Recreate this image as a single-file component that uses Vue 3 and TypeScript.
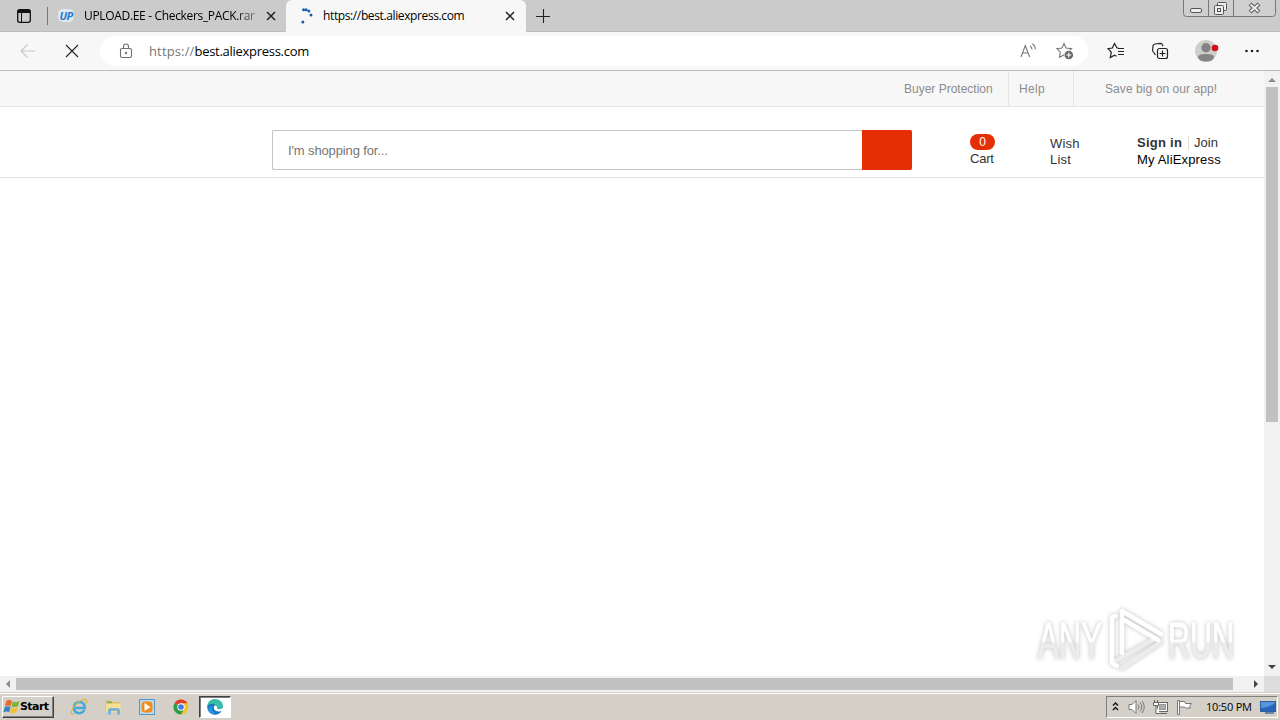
<script setup lang="ts">
interface Launcher { id: string; active: boolean }

const tabs = [
  { title: 'UPLOAD.EE - Checkers_PACK.rar', active: false },
  { title: 'https://best.aliexpress.com', active: true },
]
const launchers: Launcher[] = [
  { id: 'ie', active: false },
  { id: 'explorer', active: false },
  { id: 'player', active: false },
  { id: 'chrome', active: false },
  { id: 'edge', active: true },
]
</script>

<template>
  <div class="screen">
    <header class="tabstrip">
      <svg class="tab-menu" width="16" height="16" viewBox="0 0 16 16">
        <rect x="1.700" y="1.700" width="12.600" height="12.600" rx="2" fill="none" stroke="#111" stroke-width="1.300" />
        <path d="M1.500 5V3.500Q1.500 1.500 3.500 1.500h9q2 0 2 2V5z" fill="#111" />
        <path d="M5.500 5v9" stroke="#111" />
      </svg>
      <i class="sep"></i>
      <div v-for="tab in tabs" :key="tab.title" class="tab" :class="{ active: tab.active }">
        <svg v-if="tab.active" class="fav" width="16" height="16" viewBox="0 0 16 16">
          <g fill="#0f5fa8">
            <circle cx="5.500" cy="1.800" r="1.500" /><circle cx="8" cy="1.700" r="1.500" /><circle cx="10.800" cy="3" r="1.500" />
            <circle cx="13" cy="7" r="1.500" /><circle cx="4.800" cy="14" r="1.500" />
          </g>
        </svg>
        <span v-else class="fav up">UP</span>
        <span class="title">{{ tab.title }}</span>
        <svg class="close" width="10" height="10" viewBox="0 0 10 10"><path d="M1 1l8 8M9 1l-8 8" stroke="#222" stroke-width="1.500" /></svg>
      </div>
      <svg class="plus" width="14" height="14" viewBox="0 0 14 14"><path d="M7.500 0v14M0 7.500h14" stroke="#222" stroke-width="1.100" /></svg>
      <svg class="winctl" width="94" height="18" viewBox="0 0 94 18">
        <path d="M.5 0v13.500q0 3 3 3h86q3 0 3-3V0M25.500 0v16.500M50.500 0v16.500" fill="#cfcfcf" stroke="#777" />
        <rect x="7.500" y="8.500" width="11" height="4" rx="1.500" fill="#eee" stroke="#555" />
        <g fill="#eee" stroke="#555"><rect x="34.500" y="2.500" width="9" height="8" rx="1" /><rect x="31.500" y="5.500" width="9" height="9" rx="1" /><rect x="34.500" y="8.500" width="3" height="3" /></g>
        <path d="M67 4l9 8M76 4l-9 8" stroke="#555" stroke-width="4" /><path d="M67.500 4.500l8 7M75.500 4.500l-8 7" stroke="#eee" stroke-width="2" />
      </svg>
    </header>

    <div class="toolbar">
      <svg class="back" width="18" height="16" viewBox="0 0 18 16"><path d="M16 8H2M8.500 1.500L2 8l6.500 6.500" fill="none" stroke="#c8c8c8" stroke-width="1.200" /></svg>
      <svg class="stop" width="14" height="14" viewBox="0 0 14 14"><path d="M1 1l12 12M13 1L1 13" stroke="#222" stroke-width="1.100" /></svg>
      <div class="omnibox">
        <svg width="14" height="16" viewBox="0 0 14 16" fill="none" stroke="#707070" stroke-width="1.100"><rect x="1.500" y="5.500" width="11" height="9" rx="1.500" /><path d="M4.500 5.500V3.500a2.500 2.500 0 0 1 5 0v2" /><circle cx="7" cy="10" r=".6" fill="#707070" /></svg>
        <span class="url"><em>https://</em>best.aliexpress.com</span>
        <svg class="read" width="17" height="16" viewBox="0 0 17 16" fill="none" stroke="#777" stroke-width="1.100"><path d="M1 14L5.300 2.500 9.600 14M2.500 10h5.600M10 3q2 1.200 2 3.500M12.300.8q3.200 2 2.900 5.700" /></svg>
        <svg class="favadd" width="18" height="18" viewBox="0 0 18 18"><path d="M8 1.500l2 4.500 5.500.7-3.800 3.600.8 4.900-4.500-2.300-4.500 2.300.8-5.100L.8 6.600 6 6z" fill="none" stroke="#777" stroke-width="1.100" /><circle cx="12.800" cy="13" r="5" fill="#fff" /><circle cx="12.800" cy="13" r="4.300" fill="#666" /><path d="M12.800 10.500v5M10.300 13h5" stroke="#fff" stroke-width="1.100" /></svg>
      </div>
      <svg class="favs" width="18" height="18" viewBox="0 0 18 18" fill="none" stroke="#222" stroke-width="1.200"><path d="M11.500 6H10L7.500 1.500 5.300 6 1 6.700l3.300 3.500-1 5.300 4.200-2.300 2 1M11 6.500h6M11 9.500h6M11 12.500h6" /></svg>
      <svg class="collect" width="18" height="18" viewBox="0 0 18 18" fill="none" stroke="#222" stroke-width="1.200"><rect x="6.500" y="6.500" width="10" height="10" rx="2" /><path d="M4.500 13L2 9.500Q1 8 1.800 6.500L2 3.800Q2.200 2.200 4 2l5.500-.6q1.500 0 2 1.500l.5 1.300M11.500 8.500v6M8.500 11.500h6" /></svg>
      <svg class="avatar" width="25" height="24" viewBox="0 0 25 24"><circle cx="12" cy="12" r="11" fill="#d0cecd" /><circle cx="12" cy="8.800" r="4.700" fill="#858381" /><path d="M4 18q0-3 8-3t8 3q-1 4.500-8 4.500T4 18" fill="#858381" /><circle cx="21" cy="9" r="3.300" fill="#d50f1b" /></svg>
      <svg class="dots" width="16" height="4" viewBox="0 0 16 4" fill="#222"><circle cx="2.500" cy="2" r="1.300" /><circle cx="8" cy="2" r="1.300" /><circle cx="13.500" cy="2" r="1.300" /></svg>
    </div>

    <div class="viewport">
      <main class="page">
        <nav class="topbar">
          <span class="protect">Buyer Protection</span>
          <span class="help">Help</span>
          <span class="app">Save big on our app!</span>
        </nav>
        <section class="head">
          <div class="search"><span>I'm shopping for...</span><b></b></div>
          <div class="cart"><b>0</b><span>Cart</span></div>
          <div class="wish">Wish<br />List</div>
          <div class="user">
            <div class="sign"><strong>Sign in</strong><i></i><span>Join</span></div>
            <span class="my">My AliExpress</span>
          </div>
        </section>
        <svg class="mark" width="230" height="80" viewBox="0 0 230 80">
          <defs>
            <linearGradient id="fade" gradientUnits="userSpaceOnUse" x1="0" y1="22" x2="0" y2="62">
              <stop offset=".5" stop-color="#fff" /><stop offset=".56" stop-color="#ececec" />
            </linearGradient>
          </defs>
          <g class="word">
            <text x="18" y="59" textLength="64" lengthAdjust="spacingAndGlyphs">ANY</text>
            <text x="148" y="59" textLength="66" lengthAdjust="spacingAndGlyphs">RUN</text>
          </g>
          <g class="play">
            <path class="dim" d="M92 64l42-24M102 69l39-26" />
            <path d="M96 17l-4 1v46l5 3" />
            <path d="M102 54V12l39 23M104 21l34 20" />
          </g>
        </svg>
      </main>
      <div class="vbar">
        <svg width="16" height="16" viewBox="0 0 16 16"><path d="M4 11l4-4 4 4z" fill="#8b8b8b" /></svg>
        <i></i>
        <svg width="16" height="16" viewBox="0 0 16 16"><path d="M4 5l4 4 4-4z" fill="#444" /></svg>
      </div>
    </div>
    <div class="hbar">
      <svg width="16" height="16" viewBox="0 0 16 16"><path d="M10 4L6 8l4 4z" fill="#8b8b8b" /></svg>
      <i></i>
      <svg class="right" width="16" height="16" viewBox="0 0 16 16"><path d="M6 4l4 4-4 4z" fill="#444" /></svg>
      <b></b>
    </div>

    <footer class="taskbar">
      <div class="start">
        <svg width="17" height="16" viewBox="-1 0 17 16"><path d="M2.500 1.800Q5 .3 8 2L6.700 7.200Q4 5.700 1 7.200z" fill="#e96b26" /><path d="M8.700 2.500Q12 4 15.500 2L14 7.200Q11 8.700 7.500 7.500z" fill="#7eb338" /><path d="M.8 8Q4 6.500 6.500 8L5.200 13.200Q3 11.700-.6 13.200z" fill="#3584c4" /><path d="M7.300 8.300Q10.500 9.700 13.800 8L12.300 13.200Q9 15 6 13.500z" fill="#f5bf32" /></svg>
        <span>Start</span>
      </div>
      <div class="apps">
        <div v-for="item in launchers" :key="item.id" class="app-button" :class="{ pressed: item.active }">
          <svg v-if="item.id === 'ie'" width="18" height="18" viewBox="0 0 18 18"><path d="M14.300 12Q12.500 15.200 9.300 15.200 4 15 4 9.800T9.500 4Q14.800 4.200 14.800 9.900H5.500" fill="none" stroke="#43a9dc" stroke-width="2.500" /><path d="M3.500 16.200Q-1 16 3.500 9.500 8.500 3 14 1.500q4-.6 2.200 4" fill="none" stroke="#dfb33c" stroke-width="1.200" /></svg>
          <svg v-else-if="item.id === 'explorer'" width="18" height="18" viewBox="0 0 18 18"><path d="M1.500 2.500h6l1 1.500h7.500v9.500H1.500z" fill="#dfbd66" /><path d="M3 3.500h5v2H3z" fill="#72b368" /><path d="M2 5.500h14.500v8.500H2z" fill="#f6df92" /><path d="M4 16.500v-4q0-2.500 2.500-2.500h7Q16 10 16 12.500v4h-3v-3.500H7v3.500z" fill="#77b5d6" /></svg>
          <svg v-else-if="item.id === 'player'" width="18" height="18" viewBox="0 0 18 18"><rect x="1.500" y="1.500" width="15" height="15" fill="#b9d9ef" stroke="#5798c5" /><rect x="3.500" y="3.500" width="11" height="11" rx="3.500" fill="#f28a18" /><path d="M6.500 5l6 4-6 4z" fill="#fff" /></svg>
          <svg v-else-if="item.id === 'chrome'" width="18" height="18" viewBox="0 0 18 18"><circle cx="9" cy="9" r="7.500" fill="#f4c52d" /><path d="M9 9L2.500 5.250A7.500 7.500 0 0 1 15.500 5.250H9z" fill="#df3d30" /><path d="M2.500 5.250A7.500 7.500 0 0 0 9 16.500L12 11 9 9z" fill="#2e9d4b" /><circle cx="9" cy="9" r="3.700" fill="#fff" /><circle cx="9" cy="9" r="2.800" fill="#3d7ce0" /></svg>
          <svg v-else width="18" height="18" viewBox="0 0 18 18"><circle cx="9" cy="9" r="7.800" fill="#1976c5" /><path d="M1.200 8.500Q2 1.200 9 1.200q7.500 0 7.800 6.500 0 3.500-3.800 3.800-3.800 0-2.500-2.500-.4-3-4-3.200Q3 5.500 1.200 8.500" fill="#38bea4" /><path d="M6.500 8Q4.500 14 10.500 16.500 5 16.500 2.500 13 1.800 8.500 6.500 8z" fill="#2399df" /><path d="M8.300 7.500q-1.800 5.500 4.200 6 2.300.2 4.700-1.500V9.500q-1.200 1.800-4.200 1.700-2.700-.4-1.900-1.900-.3-2.300-2.800-1.800z" fill="#fff" /></svg>
        </div>
      </div>
      <div class="tray">
        <svg class="chev" width="7" height="10" viewBox="0 0 7 10" fill="none" stroke="#111" stroke-width="1.400"><path d="M1 3.500L3.500 1 6 3.500M1 8L3.500 5.500 6 8" /></svg>
        <svg class="sound" width="17" height="16" viewBox="0 0 17 16" fill="none" stroke="#777"><path d="M1 5.500h3L8 1.500v13l-4-4H1z" fill="#fff" /><path d="M10 5.500q2 2.500 0 5M12 3.500q3.500 4.500 0 9M14 2q4.500 6 0 12" /></svg>
        <svg class="net" width="17" height="16" viewBox="0 0 17 16" fill="#fff" stroke="#666"><rect x="5.500" y="3.500" width="10" height="9" /><rect x="7.500" y="5.500" width="6" height="5" fill="#aaa" stroke="#999" /><path d="M7 14.500h8M2.500 1v3M5.500 1v3M1.500 3.500h5v3h-5zM4 7v7.500h4" /></svg>
        <svg class="flag" width="17" height="16" viewBox="0 0 17 16" fill="#fff" stroke="#777"><path d="M1.500 15.500V1.500h2v14zM3.500 2.500h5l1 2h6l-2 3 1 1.500H9.500L8.500 8h-5z" /></svg>
        <time>10:50 PM</time>
        <svg class="desk" width="16" height="16" viewBox="0 0 16 16"><rect x=".5" y="2.500" width="15" height="10" fill="#2765bb" stroke="#315e9c" /><path d="M1 9Q8 9 15 4V3H1z" fill="#5696dc" /><path d="M5 14h9" stroke="#506e94" stroke-width="1.500" /></svg>
      </div>
    </footer>
  </div>
</template>

<style>
html, body { margin: 0; overflow: hidden; }
</style>

<style scoped>
* { box-sizing: border-box; }
svg { display: block; flex: none; }
.screen { width: 1280px; height: 720px; display: flex; flex-direction: column; background: #fff; overflow: hidden; font: 12px/16px "Open Sans", "Noto Sans", sans-serif; color: #000; }
.tabstrip { height: 32px; flex: none; display: flex; align-items: center; background: #cbcbcb; border-bottom: 1px solid #bdbdbd; }
.tab-menu { margin-left: 16px; }
.sep { width: 1px; height: 18px; margin: 0 0 0 15px; background: #777; }
.tab { display: flex; align-items: center; width: 238px; height: 32px; padding: 0 10px 0 10px; flex: none; }
.tab.active { width: 240px; padding: 0 11px 0 12px; background: #f7f7f7; border-radius: 6px 6px 0 0; }
.fav { width: 16px; margin-right: 10px; flex: none; }
.tab.active .fav { margin-right: 9px; }
.up { font: italic 700 11px/13px "Open Sans", sans-serif; letter-spacing: -.7px; text-align: center; color: #2878d0; background: #dfe7ef; border-radius: 5px; }
.title { flex: 1; white-space: nowrap; overflow: hidden; letter-spacing: -.33px; }
.active .title { letter-spacing: -.38px; }
.tab:not(.active) .title { -webkit-mask-image: linear-gradient(to right, #000 150px, transparent 185px); mask-image: linear-gradient(to right, #000 150px, transparent 185px); }
.plus { margin-left: 10px; }
.winctl { margin-left: auto; margin-right: 3px; align-self: flex-start; }
.toolbar { height: 39px; flex: none; display: flex; align-items: center; background: #f7f7f7; border-bottom: 1px solid #bcbcbc; }
.back { margin-left: 19px; }
.stop { margin-left: 28px; }
.omnibox { width: 988px; height: 30px; margin-left: 21px; padding: 0 14px 0 19px; border-radius: 15px; background: #fff; display: flex; align-items: center; }
.url { margin-left: 16px; font-size: 13px; letter-spacing: -.28px; }
.url em { font-style: normal; color: #777; letter-spacing: .14px; }
.read { margin-left: auto; }
.favadd { margin-left: 19px; }
.favs { margin-left: 19px; }
.collect { margin-left: 26px; }
.avatar { margin-left: 25px; }
.dots { margin-left: 25px; }
.viewport { height: 605px; flex: none; display: flex; }
.page { width: 1264px; display: flex; flex-direction: column; font-family: "Liberation Sans", Arial, sans-serif; }
.topbar { height: 36px; flex: none; display: flex; background: #f7f7f7; border-bottom: 1px solid #e5e5e5; color: #8c8c8c; line-height: 37px; }
.protect { margin-left: 904px; width: 104px; white-space: nowrap; }
.help { width: 65px; padding-left: 10px; border-left: 1px solid #e5e5e5; letter-spacing: .3px; }
.app { padding-left: 31px; border-left: 1px solid #e5e5e5; letter-spacing: .07px; white-space: nowrap; }
.head { height: 71px; flex: none; display: flex; border-bottom: 1px solid #e1e1e1; color: #333; font-size: 13px; }
.search { margin: 23px 0 0 272px; width: 640px; height: 40px; display: flex; justify-content: space-between; border: 1px solid #c4c4c4; border-right: 0; border-radius: 2px; padding-left: 15px; line-height: 39px; color: #757575; letter-spacing: -.13px; }
.search b { width: 50px; height: 40px; margin-top: -1px; background: #e62e04; border-radius: 0 2px 2px 0; }
.cart { width: 25px; margin: 27px 0 0 58px; }
.cart b { display: block; height: 16px; border-radius: 8px; background: #e62e04; color: #fff; font-weight: 400; text-align: center; font-size: 12px; }
.cart span { display: block; line-height: 18px; letter-spacing: -.2px; }
.wish { width: 32px; margin: 29px 0 0 55px; letter-spacing: .2px; }
.user { margin: 27px 0 0 55px; white-space: nowrap; line-height: 17px; }
.sign { display: flex; align-items: center; }
.sign strong { letter-spacing: .25px; }
.sign i { width: 1px; height: 14px; margin: 0 5px 0 6px; background: #ddd; }
.my { color: #000; letter-spacing: .17px; }
.mark { margin: auto 14px -3px auto; filter: drop-shadow(0 0 2px rgba(0, 0, 0, .25)); }
.word { fill: url(#fade); font: 400 50px "Liberation Sans", Arial, sans-serif; stroke: url(#fade); stroke-width: 1; }
.play { fill: none; stroke: #fff; stroke-width: 4.5; stroke-linejoin: round; stroke-linecap: round; }
.play .dim { stroke: #ececec; }
.vbar { width: 16px; background: #f1f1f1; display: flex; flex-direction: column; }
.vbar i { width: 12px; height: 335px; margin: 0 2px auto; background: #c1c1c1; }
.hbar { height: 16px; flex: none; display: flex; background: #f1f1f1; }
.hbar i { width: 1217px; height: 12px; margin-top: 2px; background: #c1c1c1; }
.hbar .right { margin-left: auto; }
.hbar b { width: 16px; background: #dcdcdc; }
.taskbar { height: 28px; flex: none; display: flex; align-items: center; background: #d4d0c8; border-top: 1px solid #d4d0c8; box-shadow: inset 0 1px #fff; padding: 3px 2px 2px; }
.start { width: 52px; height: 22px; display: flex; align-items: center; border: 1px solid; border-color: #fff #404040 #404040 #fff; box-shadow: inset -1px -1px #808080; font: 700 11px/14px "DejaVu Sans", sans-serif; letter-spacing: -.55px; }
.apps { display: flex; gap: 2px; margin-left: 9px; }
.app-button { width: 32px; height: 22px; display: flex; align-items: center; justify-content: center; }
.app-button.pressed { background: #fff; border: 1px solid; border-color: #404040 #fff #fff #404040; box-shadow: inset 1px 1px #808080; }
.tray { width: 172px; height: 22px; margin-left: auto; display: flex; align-items: center; border: 1px solid; border-color: #808080 #fff #fff #808080; }
.chev { margin-left: 5px; }
.sound { margin-left: 9px; }
.net { margin-left: 7px; }
.flag { margin-left: 7px; }
time { margin-left: 13px; width: 46px; font: 11px/16px "Open Sans", sans-serif; white-space: nowrap; letter-spacing: -.2px; }
.desk { margin-left: auto; margin-right: 1px; }
</style>
